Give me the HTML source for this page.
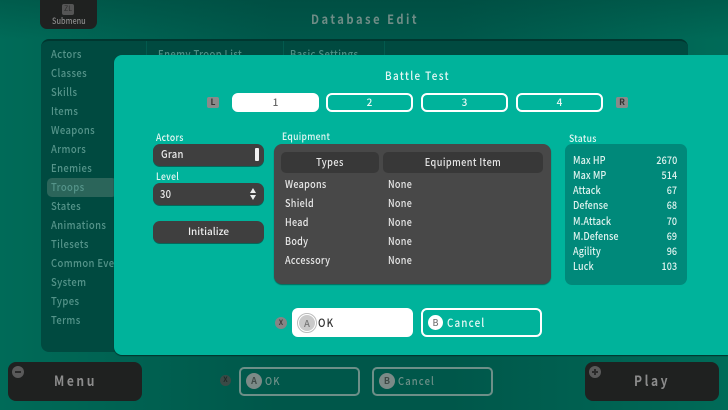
<!DOCTYPE html>
<html>
<head>
<meta charset="utf-8">
<style>
html,body{margin:0;padding:0;}
body{width:728px;height:410px;overflow:hidden;position:relative;background:linear-gradient(90deg,#006b58 0,#00574a 38%,#00574a 62%,#006b58 100%);font-family:"Noto Sans CJK JP","Liberation Sans",sans-serif;}
div{position:absolute;box-sizing:border-box;}
.t{white-space:nowrap;line-height:16px;height:16px;transform-origin:left center;transform:scaleX(.86);}
.side{left:51px;font-size:11px;letter-spacing:.45px;color:#55948a;font-weight:500;}
.lbl{font-size:10px;color:#e4f7f3;letter-spacing:.35px;font-weight:500;}
.eq{font-size:10.5px;color:#e8e8e8;letter-spacing:.35px;font-weight:500;}
.st{font-size:10.5px;color:#dff3ef;left:573px;font-weight:500;letter-spacing:.1px;}
.sv{font-size:10.5px;color:#dff3ef;right:51px;text-align:right;font-weight:500;transform-origin:right center;letter-spacing:.1px;}
.tab{top:93px;width:87px;height:19px;border-radius:6px;border:2.5px solid #fff;color:#e8f8f5;font-size:10px;font-weight:500;text-align:center;line-height:14px;}
.dark{background:#3f3f3f;border-radius:7px;box-shadow:0 1px 0 #04685a;}
.hd{background:#383838;border-radius:5px;top:152px;height:21px;color:#e6e6e6;font-size:10.5px;font-weight:500;text-align:center;line-height:21px;letter-spacing:.5px;}
.hd span{display:inline-block;transform:scaleX(.87);white-space:nowrap;}
.circ{border-radius:50%;text-align:center;}
.key{top:97px;width:12px;height:11px;background:#8a8a8a;border-radius:2px;color:#333;font-size:8.5px;font-weight:700;line-height:11px;text-align:center;}
.btxt{font-size:11px;letter-spacing:1.3px;font-weight:500;}
</style>
</head>
<body>
<!-- top bar -->
<div style="left:0;top:0;width:728px;height:39px;background:linear-gradient(180deg,rgba(0,64,54,.35),rgba(0,64,54,0));"></div>
<div style="left:40px;top:-6px;width:57px;height:35px;background:#1f2120;border-radius:7px;"></div>
<div style="left:62px;top:4px;width:12px;height:11px;background:#555;border-radius:2px;color:#2c2c2c;font-size:7px;line-height:11px;text-align:center;">ZL</div>
<div class="t" style="left:52px;top:13px;font-size:8.5px;font-weight:500;color:#8b8b8b;">Submenu</div>
<div class="t" style="left:311px;top:11px;font-size:13px;font-weight:700;letter-spacing:2.9px;color:#6f8c86;">Database Edit</div>

<!-- background panel -->
<div style="left:41px;top:39px;width:647px;height:313px;background:#004a40;border-radius:8px;border-top:2px solid #00362f;"></div>
<div style="left:47px;top:178px;width:70px;height:19px;background:#2b655a;border-radius:5px;"></div>
<div style="left:146px;top:41px;width:1px;height:14px;background:#035a4e;"></div>
<div style="left:283px;top:41px;width:1px;height:14px;background:#035a4e;"></div>
<div style="left:384px;top:41px;width:1px;height:14px;background:#035a4e;"></div>
<div class="t" style="left:158px;top:46px;font-size:11px;letter-spacing:.45px;color:#4f8f85;font-weight:500;">Enemy Troop List</div>
<div class="t" style="left:290px;top:46px;font-size:11px;letter-spacing:.45px;color:#4f8f85;font-weight:500;">Basic Settings</div>
<div class="t side" style="top:46px;">Actors</div>
<div class="t side" style="top:65px;">Classes</div>
<div class="t side" style="top:84px;">Skills</div>
<div class="t side" style="top:103px;">Items</div>
<div class="t side" style="top:122px;">Weapons</div>
<div class="t side" style="top:141px;">Armors</div>
<div class="t side" style="top:160px;">Enemies</div>
<div class="t side" style="top:179px;">Troops</div>
<div class="t side" style="top:198px;">States</div>
<div class="t side" style="top:217px;">Animations</div>
<div class="t side" style="top:236px;">Tilesets</div>
<div class="t side" style="top:255px;">Common Events</div>
<div class="t side" style="top:274px;">System</div>
<div class="t side" style="top:293px;">Types</div>
<div class="t side" style="top:312px;">Terms</div>

<!-- bottom bar -->
<div style="left:8px;top:362px;width:134px;height:39px;background:#1f2120;border-radius:8px;"></div>
<div class="circ" style="left:12px;top:366px;width:12px;height:12px;background:#5a5a5a;"></div>
<div style="left:15px;top:371px;width:6px;height:2px;background:#2a2a2a;"></div>
<div class="t" style="left:54px;top:373px;font-size:14px;font-weight:700;letter-spacing:3px;color:#8c8c8c;">Menu</div>
<div class="circ" style="left:220px;top:375px;width:11px;height:11px;background:#3a4a46;color:#1f2a28;font-size:7px;line-height:11px;font-weight:700;">X</div>
<div style="left:239px;top:367px;width:121px;height:29px;border:2px solid #6d8f88;border-radius:5px;"></div>
<div class="circ" style="left:246px;top:373px;width:16px;height:16px;background:#7b8a87;color:#3f4a47;font-size:9px;line-height:16px;font-weight:700;">A</div>
<div class="t btxt" style="left:265px;top:373px;color:#6d9088;">OK</div>
<div style="left:372px;top:367px;width:121px;height:29px;border:2px solid #6d8f88;border-radius:5px;"></div>
<div class="circ" style="left:379px;top:373px;width:16px;height:16px;background:#7b8a87;color:#3f4a47;font-size:9px;line-height:16px;font-weight:700;">B</div>
<div class="t btxt" style="left:398px;top:373px;color:#6d9088;">Cancel</div>
<div style="left:585px;top:362px;width:134px;height:39px;background:#1f2120;border-radius:8px;"></div>
<div class="circ" style="left:589px;top:366px;width:12px;height:12px;background:#5a5a5a;"></div>
<div style="left:592px;top:371px;width:6px;height:2px;background:#2a2a2a;"></div>
<div style="left:594px;top:369px;width:2px;height:6px;background:#2a2a2a;"></div>
<div class="t" style="left:634px;top:373px;font-size:14px;font-weight:700;letter-spacing:3px;color:#8c8c8c;">Play</div>

<!-- modal -->
<div style="left:114px;top:55px;width:614px;height:300px;background:#00b39b;border-radius:8px 0 0 8px;box-shadow:0 1px 1px #00332c;"></div>
<div class="t" style="left:385px;top:68px;font-size:11.5px;font-weight:500;letter-spacing:1.6px;color:#e6f8f5;">Battle Test</div>

<div class="key" style="left:207px;">L</div>
<div class="tab" style="left:232px;background:#fff;color:#666;">1</div>
<div class="tab" style="left:326px;">2</div>
<div class="tab" style="left:421px;">3</div>
<div class="tab" style="left:516px;">4</div>
<div class="key" style="left:616px;">R</div>

<!-- left column -->
<div class="t lbl" style="left:156px;top:129px;">Actors</div>
<div class="dark" style="left:153px;top:144px;width:111px;height:22px;"></div>
<div class="t" style="left:161px;top:146px;font-size:11px;font-weight:500;letter-spacing:.3px;color:#ececec;">Gran</div>
<div style="left:255px;top:148px;width:4px;height:13px;background:#f2f2f2;border-radius:1px;"></div>
<div class="t lbl" style="left:156px;top:168px;">Level</div>
<div class="dark" style="left:153px;top:183px;width:111px;height:22px;"></div>
<div class="t" style="left:160px;top:186px;font-size:11px;font-weight:500;letter-spacing:.3px;color:#ececec;">30</div>
<div style="left:250px;top:188px;width:0;height:0;border-left:3.5px solid transparent;border-right:3.5px solid transparent;border-bottom:5px solid #eee;"></div>
<div style="left:250px;top:195px;width:0;height:0;border-left:3.5px solid transparent;border-right:3.5px solid transparent;border-top:5px solid #eee;"></div>
<div class="dark" style="left:153px;top:221px;width:111px;height:22px;color:#ececec;font-size:10px;font-weight:500;text-align:center;line-height:20px;">Initialize</div>

<!-- equipment -->
<div class="t lbl" style="left:282px;top:128px;">Equipment</div>
<div style="left:274px;top:144px;width:277px;height:140px;background:#484848;border-radius:8px;box-shadow:0 1px 1px #04685a;"></div>
<div class="hd" style="left:281px;width:98px;"><span>Types</span></div>
<div class="hd" style="left:383px;width:160px;"><span>Equipment Item</span></div>
<div class="t eq" style="left:285px;top:177px;">Weapons</div>
<div class="t eq" style="left:285px;top:196px;">Shield</div>
<div class="t eq" style="left:285px;top:215px;">Head</div>
<div class="t eq" style="left:285px;top:234px;">Body</div>
<div class="t eq" style="left:285px;top:253px;">Accessory</div>
<div class="t eq" style="left:387.5px;top:177px;">None</div>
<div class="t eq" style="left:387.5px;top:196px;">None</div>
<div class="t eq" style="left:387.5px;top:215px;">None</div>
<div class="t eq" style="left:387.5px;top:234px;">None</div>
<div class="t eq" style="left:387.5px;top:253px;">None</div>

<!-- status -->
<div class="t lbl" style="left:569px;top:130px;">Status</div>
<div style="left:565px;top:144px;width:122px;height:141px;background:#00897a;border-radius:7px;"></div>
<div class="t st" style="top:153px;">Max HP</div><div class="t sv" style="top:153px;">2670</div>
<div class="t st" style="top:168px;">Max MP</div><div class="t sv" style="top:168px;">514</div>
<div class="t st" style="top:183px;">Attack</div><div class="t sv" style="top:183px;">67</div>
<div class="t st" style="top:198px;">Defense</div><div class="t sv" style="top:198px;">68</div>
<div class="t st" style="top:214px;">M.Attack</div><div class="t sv" style="top:214px;">70</div>
<div class="t st" style="top:229px;">M.Defense</div><div class="t sv" style="top:229px;">69</div>
<div class="t st" style="top:244px;">Agility</div><div class="t sv" style="top:244px;">96</div>
<div class="t st" style="top:259px;">Luck</div><div class="t sv" style="top:259px;">103</div>

<!-- dialog buttons -->
<div class="circ" style="left:275px;top:317px;width:12px;height:12px;background:#858585;color:#3c3c3c;font-size:7px;line-height:12px;font-weight:700;">X</div>
<div style="left:292px;top:308px;width:121px;height:29px;background:#fff;border-radius:6px;"></div>
<div class="circ" style="left:297px;top:312.5px;width:20px;height:20px;border:1px solid #bcbcbc;"></div>
<div class="circ" style="left:299px;top:314.5px;width:16px;height:16px;background:#c9c9c9;color:#777;font-size:9.5px;line-height:16px;font-weight:500;">A</div>
<div class="t btxt" style="left:318px;top:315px;color:#333;font-size:11.5px;">OK</div>
<div style="left:421px;top:308px;width:121px;height:29px;border:2.5px solid #fff;border-radius:6px;"></div>
<div class="circ" style="left:428px;top:315px;width:15px;height:15px;background:#fff;color:#777;font-size:9px;line-height:15px;font-weight:500;">B</div>
<div class="t btxt" style="left:447px;top:315px;font-size:11.5px;color:#e6f8f5;">Cancel</div>
</body>
</html>
